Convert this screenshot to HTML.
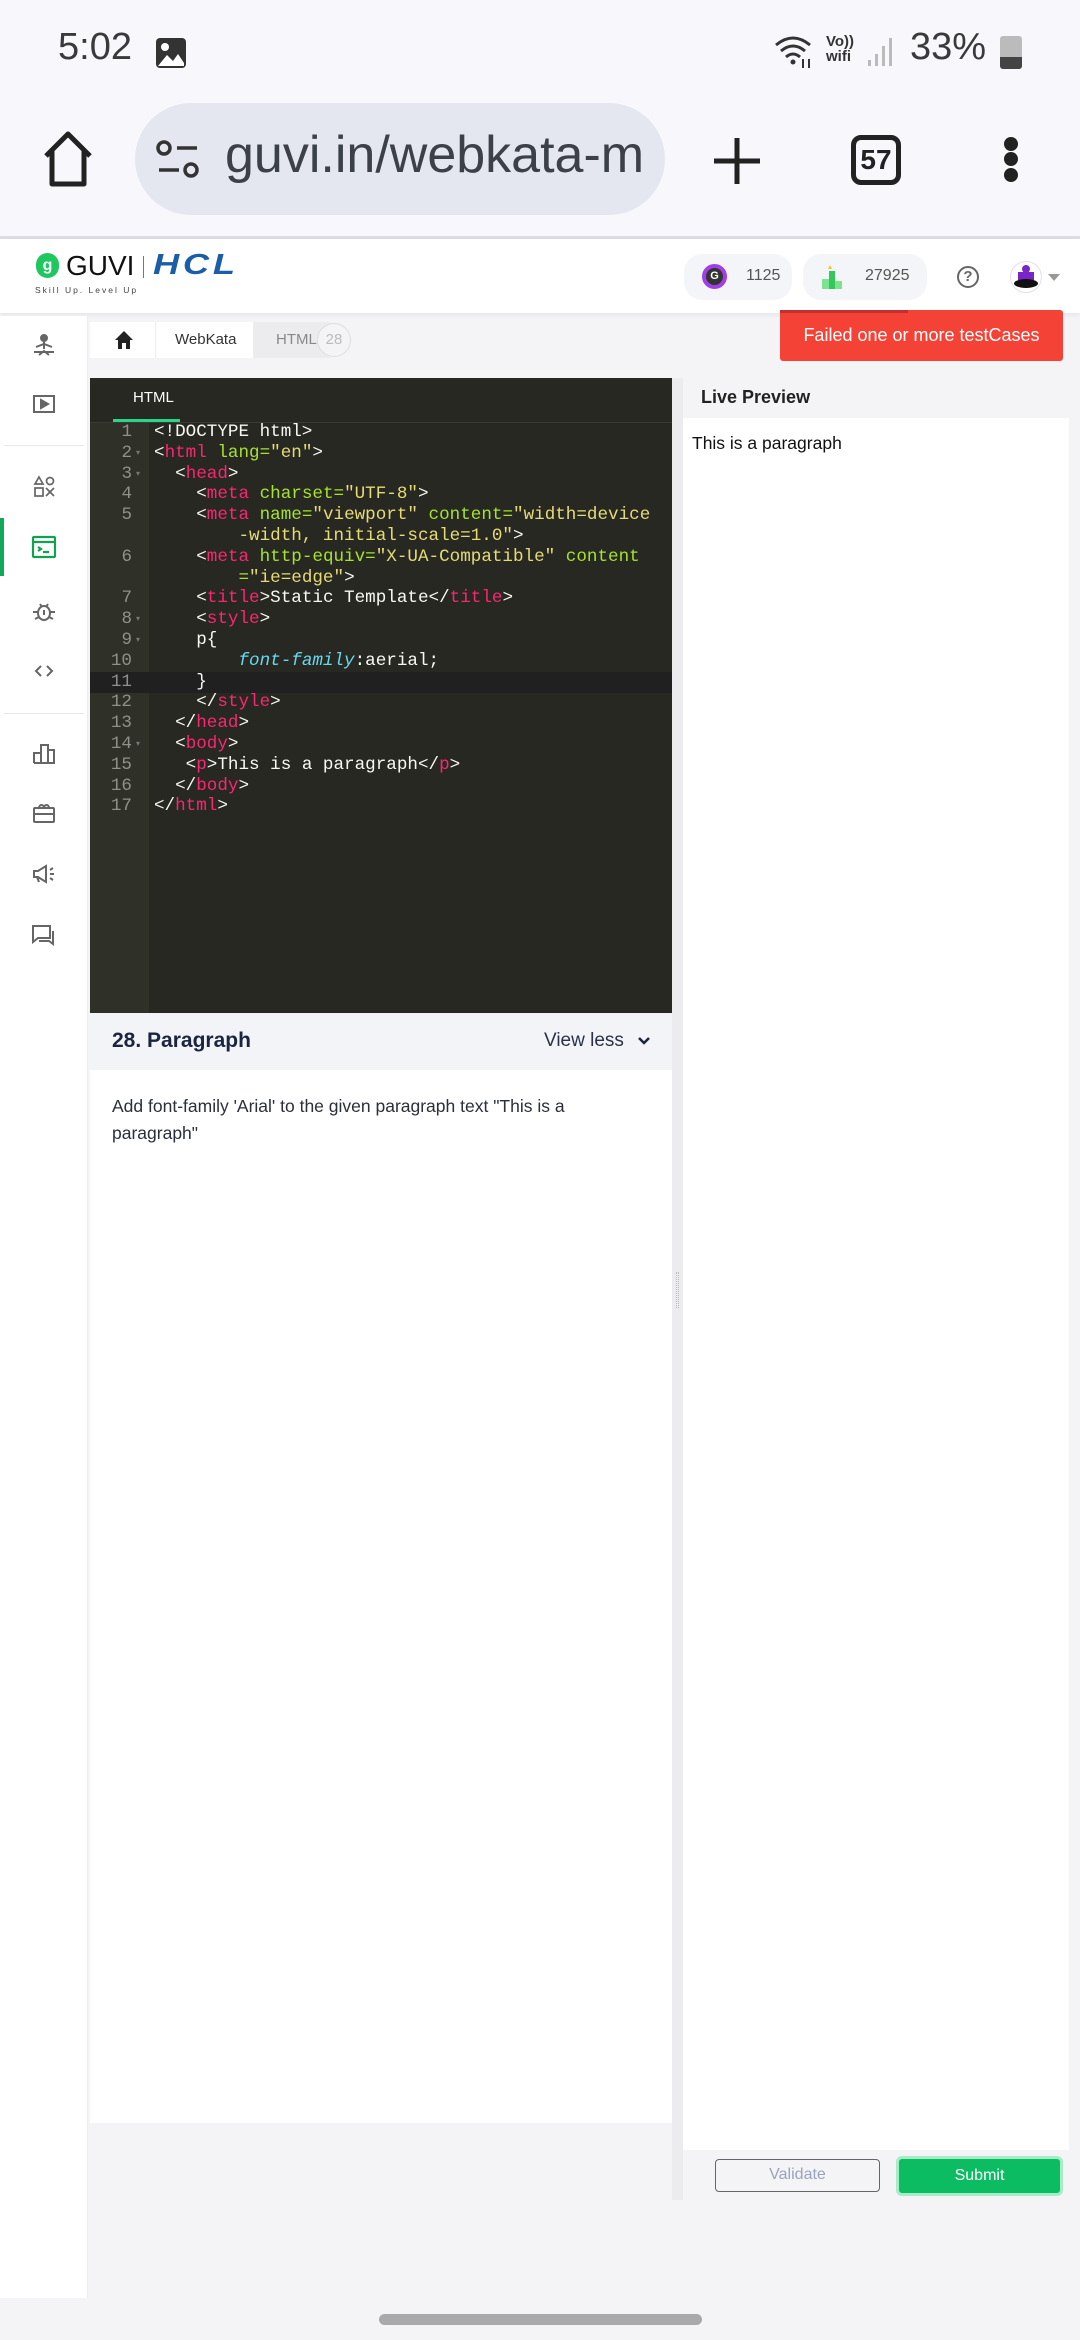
<!DOCTYPE html>
<html><head><meta charset="utf-8"><style>
*{margin:0;padding:0;box-sizing:border-box}
body{width:1080px;height:2340px;position:relative;overflow:hidden;background:#f4f4f7;font-family:"Liberation Sans",sans-serif}
.a{position:absolute}
.code{font-family:"Liberation Mono",monospace;font-size:17.6px;color:#f8f8f2;white-space:pre;line-height:20.8px}
.t{color:#f92672}.at{color:#a6e22e}.s{color:#e6db74}.k{color:#66d9ef;font-style:italic}
.ln{font-family:"Liberation Mono",monospace;font-size:17.6px;color:#8f908a;line-height:20.8px;text-align:right;width:42px}
.ic{position:absolute;left:30px;width:28px;height:28px}
</style></head><body>
<div class="a" style="left:0;top:0;width:1080px;height:237px;background:#f8f7fc"></div>
<div class="a" style="left:58px;top:26px;font-size:38px;color:#3a3a3a">5:02</div>
<svg class="a" style="left:154px;top:36px" width="34" height="34" viewBox="0 0 34 34"><rect x="2" y="2" width="30" height="30" rx="4" fill="#333"/><circle cx="11" cy="11" r="4" fill="#fff"/><path d="M4 30 L13 19 L19 25 L24 18 L30 27 L30 30Z" fill="#fff"/></svg>
<svg class="a" style="left:773px;top:33px" width="45" height="36" viewBox="0 0 45 36"><path d="M3 12 Q20 -2 37 12" stroke="#333" stroke-width="3" fill="none"/><path d="M8 18 Q20 8 32 18" stroke="#333" stroke-width="3" fill="none"/><path d="M13 24 Q20 18 27 24" stroke="#333" stroke-width="3" fill="none"/><circle cx="20" cy="29" r="2.5" fill="#333"/><path d="M30 26v9M36 26v9" stroke="#333" stroke-width="2"/></svg>
<div class="a" style="left:826px;top:34px;font-size:15px;line-height:15px;color:#333;font-weight:bold">Vo))<br>wifi</div>
<svg class="a" style="left:866px;top:36px" width="28" height="32"><rect x="2" y="24" width="3" height="6" fill="#bbb"/><rect x="9" y="18" width="3" height="12" fill="#bbb"/><rect x="16" y="10" width="3" height="20" fill="#bbb"/><rect x="23" y="2" width="3" height="28" fill="#bbb"/></svg>
<div class="a" style="left:910px;top:26px;font-size:38px;color:#3a3a3a">33%</div>
<div class="a" style="left:1000px;top:36px;width:22px;height:33px;background:#bbb;border-radius:3px"></div>
<div class="a" style="left:1000px;top:57px;width:22px;height:12px;background:#444;border-radius:0 0 3px 3px"></div>
<svg class="a" style="left:40px;top:130px" width="56" height="58" viewBox="0 0 56 58"><path d="M6 26 L28 4 L50 26 M12 21 V54 H44 V21" stroke="#222" stroke-width="5" fill="none" stroke-linejoin="round"/></svg>
<div class="a" style="left:135px;top:103px;width:530px;height:112px;background:#e4e7ef;border-radius:56px"></div>
<svg class="a" style="left:155px;top:140px" width="46" height="40"><circle cx="9" cy="8" r="6" stroke="#333" stroke-width="3.5" fill="none"/><path d="M22 8h20M4 30h20" stroke="#333" stroke-width="3.5"/><circle cx="36" cy="30" r="6" stroke="#333" stroke-width="3.5" fill="none"/></svg>
<div class="a" style="left:225px;top:125px;font-size:52px;color:#3c4048">guvi.in/webkata-m</div>
<svg class="a" style="left:712px;top:136px" width="50" height="50"><path d="M25 2v46M2 25h46" stroke="#222" stroke-width="5"/></svg>
<div class="a" style="left:851px;top:135px;width:50px;height:50px;border:5px solid #222;border-radius:10px;font-size:28px;font-weight:bold;text-align:center;line-height:40px;color:#222">57</div>
<div class="a" style="left:1004px;top:137px;width:14px;height:14px;border-radius:7px;background:#222"></div>
<div class="a" style="left:1004px;top:152px;width:14px;height:14px;border-radius:7px;background:#222"></div>
<div class="a" style="left:1004px;top:168px;width:14px;height:14px;border-radius:7px;background:#222"></div>
<div class="a" style="left:0;top:236px;width:1080px;height:3px;background:#dcdbe6"></div>
<div class="a" style="left:0;top:239px;width:1080px;height:74px;background:#fff;box-shadow:0 2px 4px rgba(0,0,0,.06)"></div>
<div class="a" style="left:36px;top:253px;width:23px;height:25px;border-radius:12px;background:#1ec85f;color:#fff;font-size:16px;text-align:center;line-height:25px;font-weight:bold">g</div>
<div class="a" style="left:66px;top:250px;font-size:28px;color:#111">GUVI</div>
<div class="a" style="left:143px;top:256px;width:1px;height:22px;background:#777"></div>
<div class="a" style="left:153px;top:249px;font-size:29px;color:#1a5ea8;font-weight:bold;font-style:italic;letter-spacing:3px;transform:scaleX(1.25);transform-origin:left">HCL</div>
<div class="a" style="left:35px;top:285px;font-size:8.5px;color:#444;letter-spacing:2px">Skill Up. Level Up</div>
<div class="a" style="left:684px;top:254px;width:108px;height:46px;border-radius:18px;background:#f4f5f8"></div>
<div class="a" style="left:702px;top:264px;width:25px;height:25px;border-radius:13px;border:4px solid #a23ee6;background:#333;color:#fff;font-size:11px;font-weight:bold;text-align:center;line-height:17px">G</div>
<div class="a" style="left:746px;top:267px;font-size:16px;color:#555">1125</div>
<div class="a" style="left:803px;top:254px;width:124px;height:46px;border-radius:18px;background:#f4f5f8"></div>
<svg class="a" style="left:822px;top:265px" width="24" height="24"><path d="M8 0 L10 4 L6 4Z" fill="#f4c430"/><rect x="7" y="6" width="6" height="18" fill="#34c759"/><rect x="0" y="14" width="7" height="10" fill="#7de38f"/><rect x="13" y="16" width="7" height="8" fill="#7de38f"/></svg>
<div class="a" style="left:865px;top:267px;font-size:16px;color:#555">27925</div>
<div class="a" style="left:957px;top:266px;width:22px;height:22px;border-radius:11px;border:2.5px solid #666;color:#666;font-size:15px;font-weight:bold;text-align:center;line-height:17px">?</div>
<div class="a" style="left:1010px;top:261px;width:32px;height:32px;border-radius:16px;border:1.5px solid #e6dcf3;background:#fff;overflow:hidden"><div class="a" style="left:11px;top:3px;width:8px;height:8px;border-radius:4px;background:#7a25c8"></div><div class="a" style="left:7px;top:10px;width:16px;height:8px;background:#7a25c8"></div><div class="a" style="left:3px;top:17px;width:24px;height:9px;border-radius:50%;background:#111"></div></div>
<div class="a" style="left:1048px;top:274px;width:0;height:0;border-left:6px solid transparent;border-right:6px solid transparent;border-top:7px solid #999"></div>
<div class="a" style="left:0;top:316px;width:88px;height:1982px;background:#fff;border-right:1px solid #ececf0"></div>
<div class="a" style="left:4px;top:445px;width:80px;height:1px;background:#e8e8ec"></div>
<div class="a" style="left:4px;top:713px;width:80px;height:1px;background:#e8e8ec"></div>
<div class="a" style="left:0;top:518px;width:4px;height:58px;background:#0fa958"></div>
<svg class="ic" style="top:331px" viewBox="0 0 28 28" fill="none" stroke="#666" stroke-width="2"><circle cx="14" cy="7" r="3" fill="#666"/><path d="M14 10v8M6 16l8-3 8 3M4 21h20M9 24l5-4 5 4"/></svg>
<svg class="ic" style="top:390px" viewBox="0 0 28 28" fill="none" stroke="#666" stroke-width="2"><rect x="4" y="6" width="20" height="16"/><path d="M11 10v8l7-4z" fill="#666"/></svg>
<svg class="ic" style="top:473px" viewBox="0 0 28 28" fill="none" stroke="#666" stroke-width="1.7"><path d="M9 4l4 7H5z"/><circle cx="20" cy="8" r="3.5"/><rect x="5" y="15" width="8" height="8"/><path d="M16 15l8 8M24 15l-8 8"/></svg>
<svg class="ic" style="top:533px" viewBox="0 0 28 28" fill="none" stroke="#12a150" stroke-width="2.2"><rect x="3" y="4" width="22" height="20" rx="1"/><path d="M3 9h22M8 14l3 2-3 2M13 19h6"/></svg>
<svg class="ic" style="top:598px" viewBox="0 0 28 28" fill="none" stroke="#666" stroke-width="2"><ellipse cx="14" cy="15" rx="6" ry="7"/><path d="M10 6l2 3M18 6l-2 3M3 14h5M20 14h5M5 21l4-2M23 21l-4-2M14 12v5"/></svg>
<svg class="ic" style="top:657px" viewBox="0 0 28 28" fill="none" stroke="#666" stroke-width="2"><path d="M11 9l-5 5 5 5M17 9l5 5-5 5"/></svg>
<svg class="ic" style="top:739px" viewBox="0 0 28 28" fill="none" stroke="#666" stroke-width="2"><path d="M4 24V14h7V24M11 24V6h7v18M18 24V11h6v13H4"/></svg>
<svg class="ic" style="top:799px" viewBox="0 0 28 28" fill="none" stroke="#666" stroke-width="2"><rect x="4" y="9" width="20" height="14" rx="1"/><path d="M4 15h20M9 9c0-4 5-4 5 0c0-4 5-4 5 0"/></svg>
<svg class="ic" style="top:860px" viewBox="0 0 28 28" fill="none" stroke="#666" stroke-width="2"><path d="M4 11h4l8-5v16l-8-5H4zM7 17l2 5M20 10l3-2M20 14h4M20 18l3 2"/></svg>
<svg class="ic" style="top:921px" viewBox="0 0 28 28" fill="none" stroke="#666" stroke-width="2"><path d="M3 5h17v12H8l-5 4zM23 10v13l-4-3H9"/></svg>
<div class="a" style="left:90px;top:322px;width:240px;height:36px;background:#fff"></div>
<div class="a" style="left:253px;top:322px;width:77px;height:36px;background:#ececef"></div>
<svg class="a" style="left:114px;top:330px" width="20" height="20"><path d="M10 1L1 10h3v9h4v-6h4v6h4v-9h3z" fill="#222"/></svg>
<div class="a" style="left:155px;top:322px;width:1px;height:36px;background:#eee"></div>
<div class="a" style="left:175px;top:331px;font-size:15px;color:#333">WebKata</div>
<div class="a" style="left:276px;top:331px;font-size:15px;color:#888">HTML</div>
<div class="a" style="left:317px;top:323px;width:34px;height:34px;border-radius:17px;border:1px solid #ddd;background:#f4f4f6;color:#bbb;font-size:15px;text-align:center;line-height:32px">28</div>
<div class="a" style="left:780px;top:310px;width:283px;height:51px;background:#f44336;border-radius:3px;color:#fff;font-size:18px;text-align:center;line-height:51px">Failed one or more testCases</div>
<div class="a" style="left:780px;top:310px;width:128px;height:3px;background:#c62f2f"></div>
<div class="a" style="left:90px;top:378px;width:582px;height:635px;background:#272822"></div>
<div class="a" style="left:90px;top:422px;width:59px;height:591px;background:#2f3129"></div>
<div class="a" style="left:113px;top:419px;width:67px;height:3px;background:#28d68a"></div>
<div class="a" style="left:90px;top:422px;width:582px;height:1px;background:#3a3b35"></div>
<div class="a" style="left:133px;top:389px;font-size:15px;color:#fff">HTML</div>
<div class="a" style="left:90px;top:672px;width:582px;height:21px;background:#202020"></div>
<div class="a ln" style="left:90px;top:422px">1<br>2<br>3<br>4<br>5<br><br>6<br><br>7<br>8<br>9<br>10<br>11<br>12<br>13<br>14<br>15<br>16<br>17</div>
<div class="a" style="left:136px;top:422px;font-size:8px;color:#777;line-height:20.8px">&nbsp;<br>▾<br>▾<br><br><br><br><br><br><br>▾<br>▾<br><br><br><br><br>▾</div>
<div class="a code" style="left:154px;top:422px">&lt;!DOCTYPE html&gt;
&lt;<span class="t">html</span> <span class="at">lang=</span><span class="s">"en"</span>&gt;
  &lt;<span class="t">head</span>&gt;
    &lt;<span class="t">meta</span> <span class="at">charset=</span><span class="s">"UTF-8"</span>&gt;
    &lt;<span class="t">meta</span> <span class="at">name=</span><span class="s">"viewport"</span> <span class="at">content=</span><span class="s">"width=device</span>
<span class="s">        -width, initial-scale=1.0"</span>&gt;
    &lt;<span class="t">meta</span> <span class="at">http-equiv=</span><span class="s">"X-UA-Compatible"</span> <span class="at">content</span>
        <span class="at">=</span><span class="s">"ie=edge"</span>&gt;
    &lt;<span class="t">title</span>&gt;Static Template&lt;/<span class="t">title</span>&gt;
    &lt;<span class="t">style</span>&gt;
    p{
        <span class="k">font-family</span>:aerial;
    }
    &lt;/<span class="t">style</span>&gt;
  &lt;/<span class="t">head</span>&gt;
  &lt;<span class="t">body</span>&gt;
   &lt;<span class="t">p</span>&gt;This is a paragraph&lt;/<span class="t">p</span>&gt;
  &lt;/<span class="t">body</span>&gt;
&lt;/<span class="t">html</span>&gt;</div>
<div class="a" style="left:90px;top:1013px;width:582px;height:57px;background:#f3f4f8"></div>
<div class="a" style="left:90px;top:1070px;width:582px;height:1053px;background:#fff"></div>
<div class="a" style="left:112px;top:1029px;font-size:21px;font-weight:bold;color:#1b2540">28. Paragraph</div>
<div class="a" style="left:544px;top:1030px;font-size:19px;color:#2a3345">View less</div>
<svg class="a" style="left:638px;top:1036px" width="12" height="10"><path d="M1 2l5 5 5-5" stroke="#1b2540" stroke-width="2.5" fill="none"/></svg>
<div class="a" style="left:112px;top:1093px;width:500px;font-size:17.5px;line-height:27px;color:#2a2f3a">Add font-family 'Arial' to the given paragraph text "This is a paragraph"</div>
<div class="a" style="left:672px;top:378px;width:11px;height:1822px;background:#ececee"></div>
<div class="a" style="left:676px;top:1272px;width:3px;height:36px;border-left:1px dotted #bbb;border-right:1px dotted #bbb"></div>
<div class="a" style="left:701px;top:387px;font-size:18px;font-weight:bold;color:#222">Live Preview</div>
<div class="a" style="left:683px;top:418px;width:386px;height:1732px;background:#fff"></div>
<div class="a" style="left:692px;top:433px;font-size:17.5px;color:#111">This is a paragraph</div>
<div class="a" style="left:715px;top:2159px;width:165px;height:33px;border:1.5px solid #666;border-radius:4px;color:#9aa3bd;font-size:16px;text-align:center;line-height:30px">Validate</div>
<div class="a" style="left:896px;top:2156px;width:167px;height:40px;border:3px solid #a6ecc6;border-radius:6px;background:#0bbc63;color:#fff;font-size:16px;text-align:center;line-height:34px">Submit</div>
<div class="a" style="left:379px;top:2314px;width:323px;height:11px;border-radius:6px;background:#a9a9ab"></div>
</body></html>
